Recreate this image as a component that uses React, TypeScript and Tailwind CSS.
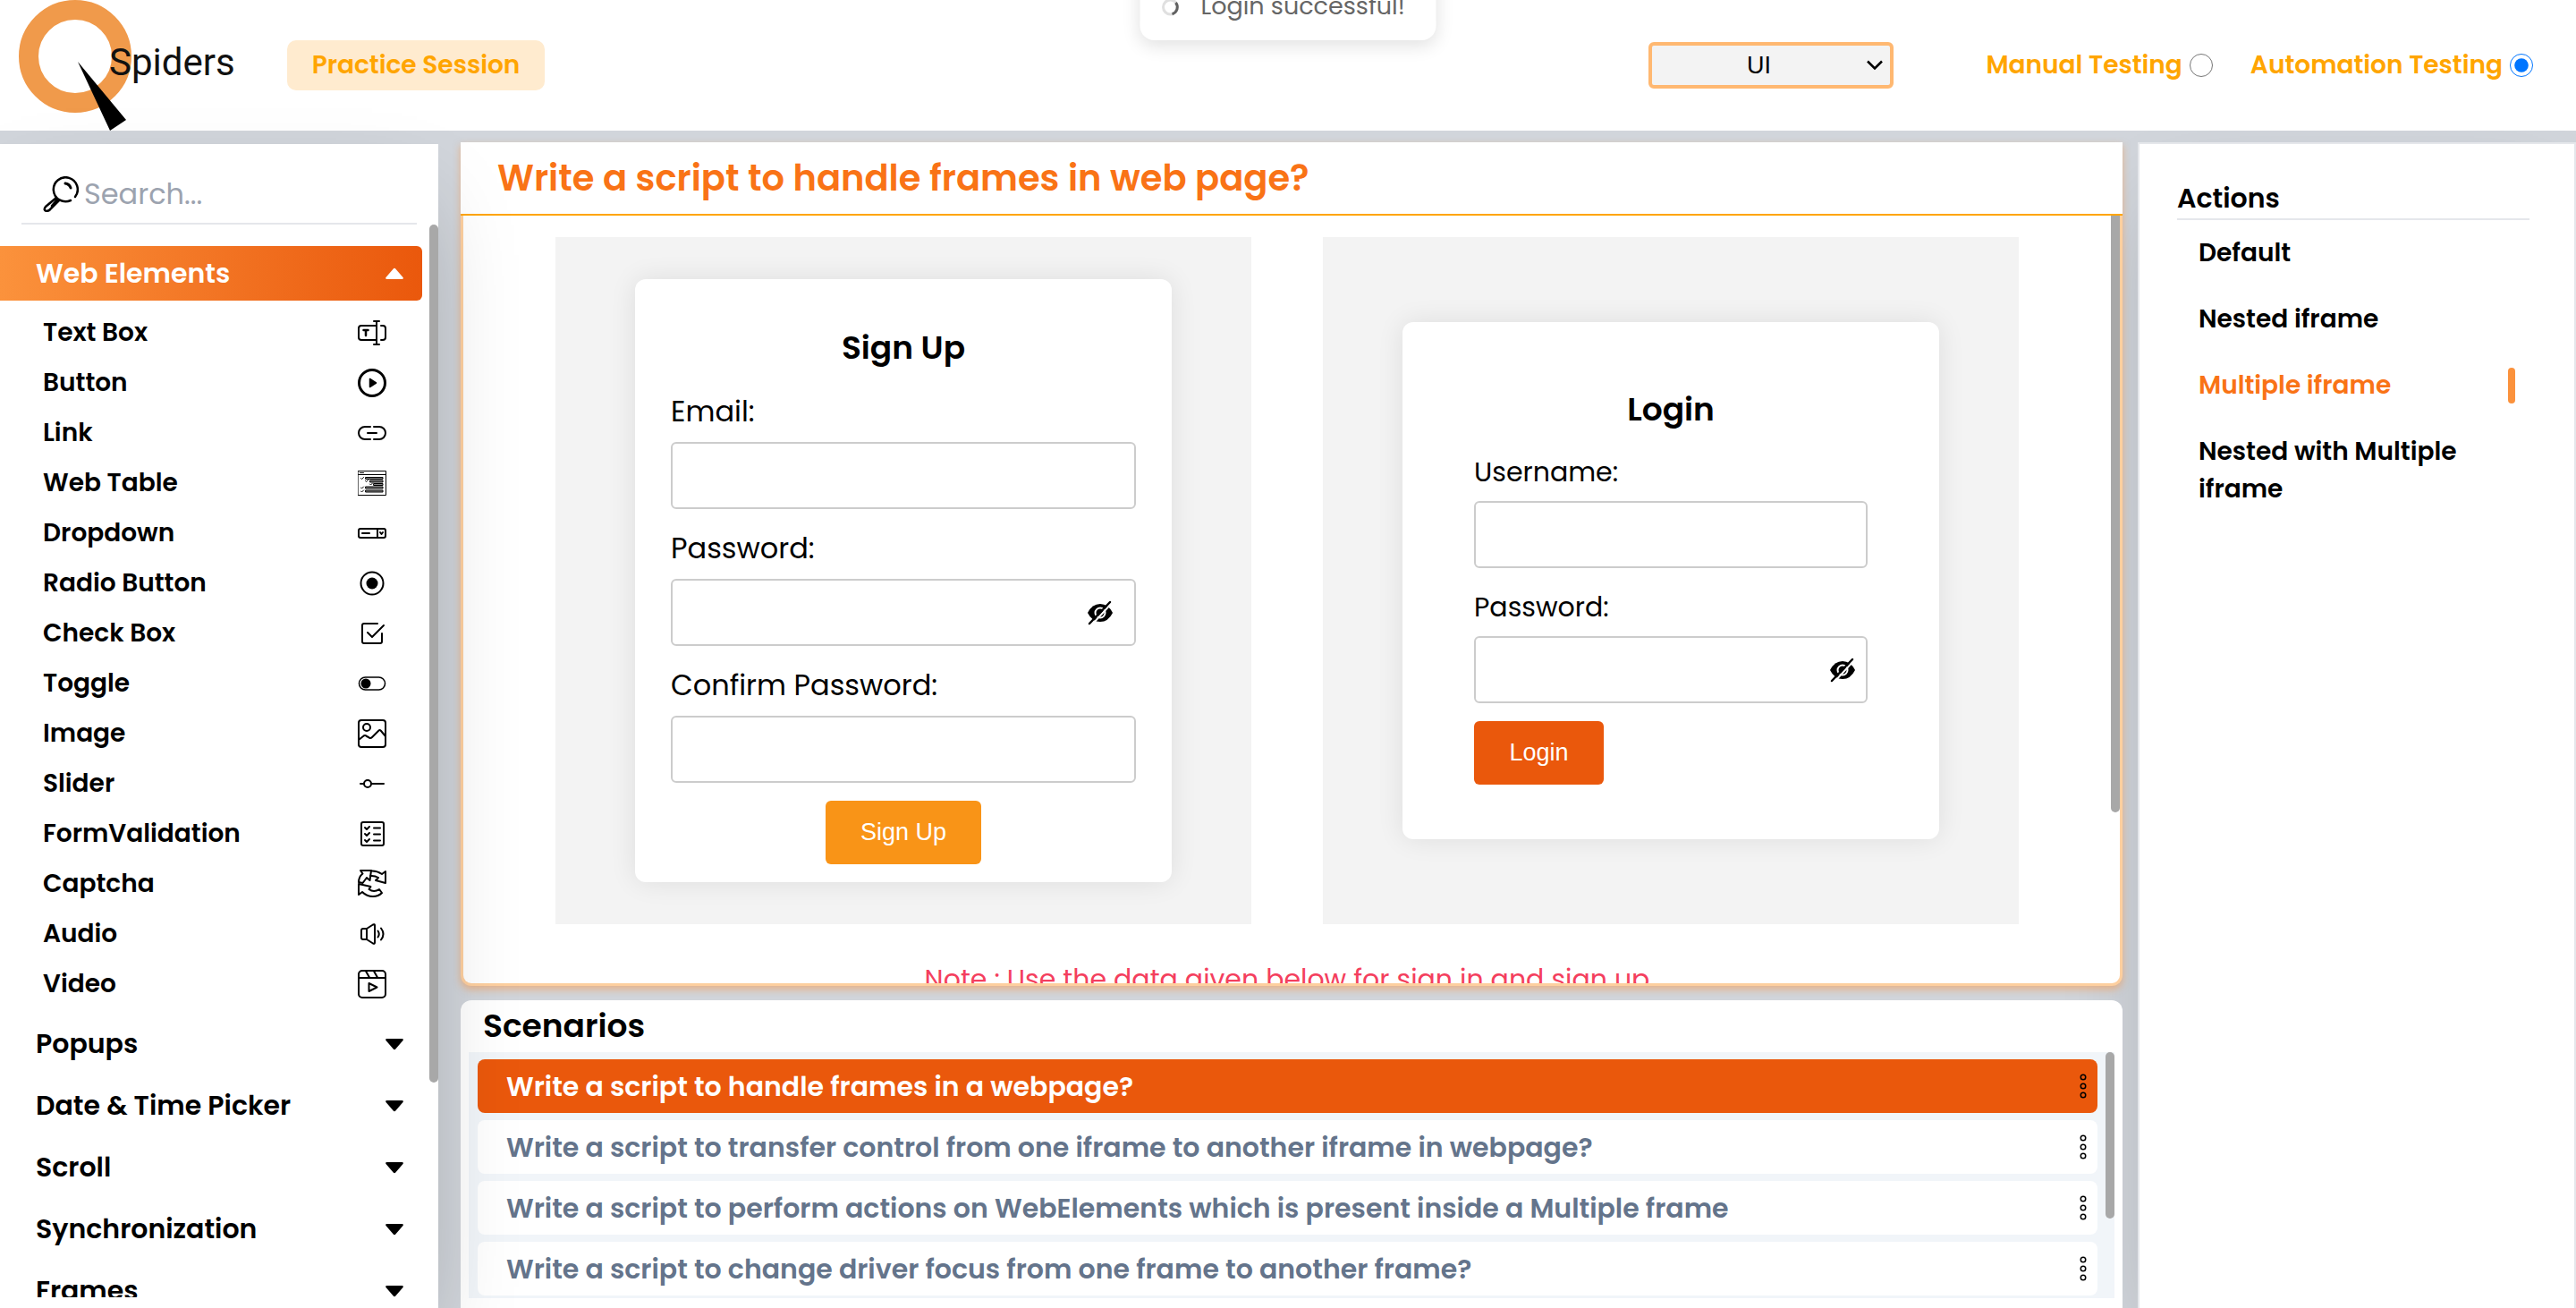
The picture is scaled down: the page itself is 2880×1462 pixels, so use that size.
import { useState, type ReactNode } from "react";

type SidebarItem = { label: string; icon: ReactNode };

function Icon({ children, width = 2 }: { children: ReactNode; width?: number }) {
  return (
    <svg
      viewBox="0 0 32 32"
      className="size-8"
      fill="none"
      stroke="currentColor"
      strokeWidth={width}
      strokeLinecap="round"
      strokeLinejoin="round"
      aria-hidden="true"
    >
      {children}
    </svg>
  );
}

const items: SidebarItem[] = [
  {
    label: "Text Box",
    icon: (
      <Icon>
        <path d="M21 8H4a3 3 0 0 0-3 3v10a3 3 0 0 0 3 3h17M26 8h2a3 3 0 0 1 3 3v10a3 3 0 0 1-3 3h-2M21 3v26M18 3h6M18 29h6" />
        <path d="M6.500 13h5M9 13v6" strokeWidth="2.500" />
      </Icon>
    ),
  },
  {
    label: "Button",
    icon: (
      <Icon width={3}>
        <circle cx="16" cy="16" r="14.500" />
        <path d="M13.500 11.500v9l7-4.500z" fill="currentColor" strokeWidth="1.500" />
      </Icon>
    ),
  },
  {
    label: "Link",
    icon: (
      <Icon>
        <path d="M14 9H8a7 7 0 0 0 0 14h6M18 9h6a7 7 0 0 1 0 14h-6M11 16h10" />
      </Icon>
    ),
  },
  {
    label: "Web Table",
    icon: (
      <Icon width={1}>
        <path d="M.5 2.500h31v27H.5zM.5 6.500h31M2.500 4.500h4" />
        <path d="M9 9.500h19v2H9zM14 13h14v2H14zM18 16.500h10v2H18zM9 20h19v2H9zM9 24h19v2H9z" fill="#888" />
        <path d="M3.500 10.500l1 1 2-2M8.500 13.500l1 1 2-2M13.500 17l1 1 2-2M3.500 21l1 1 2-2M3.500 25l1 1 2-2" />
      </Icon>
    ),
  },
  {
    label: "Dropdown",
    icon: (
      <Icon>
        <rect x="1" y="11" width="30" height="10" rx="2" />
        <path d="M22 11v10M5 16h8" />
        <path d="M25 15l1.500 2 1.500-2" />
      </Icon>
    ),
  },
  {
    label: "Radio Button",
    icon: (
      <Icon>
        <circle cx="16" cy="16" r="12.500" />
        <circle cx="16" cy="16" r="6.500" fill="currentColor" stroke="none" />
      </Icon>
    ),
  },
  {
    label: "Check Box",
    icon: (
      <Icon>
        <path d="M22 5H7a2 2 0 0 0-2 2v18a2 2 0 0 0 2 2h18a2 2 0 0 0 2-2v-9M11 15l5 5L29 7" />
      </Icon>
    ),
  },
  {
    label: "Toggle",
    icon: (
      <Icon width={1.5}>
        <rect x="1.500" y="9" width="29" height="14" rx="7" />
        <circle cx="9" cy="16" r="5.500" fill="currentColor" stroke="none" />
      </Icon>
    ),
  },
  {
    label: "Image",
    icon: (
      <Icon>
        <rect x="1" y="1" width="30" height="30" rx="3" />
        <circle cx="10" cy="9" r="4" />
        <path d="M1 23l5-4q2-2 4 0l2 1q2 2 4 0l7-7q2-2 3 0l5 6" />
      </Icon>
    ),
  },
  {
    label: "Slider",
    icon: (
      <Icon>
        <path d="M3 16h4M15 16h14" />
        <circle cx="11" cy="16" r="4" />
      </Icon>
    ),
  },
  {
    label: "FormValidation",
    icon: (
      <Icon width={2}>
        <rect x="4" y="3" width="25" height="26" rx="2" />
        <path d="M8 9l2 2 3-3M8 16l2 2 3-3M8 23l2 2 3-3M18 9.500h7M18 16.500h7M18 23.500h7" />
      </Icon>
    ),
  },
  {
    label: "Captcha",
    icon: (
      <Icon width={2}>
        <path d="M3 1h12l-1.500 11-3.500-3-4.500 6L1 14q0-6 4.500-9.500z" />
        <path d="M15 1.500q6-.5 12 3.500l4-3v13l-11-3 3-3q-4-2.500-9-2" />
        <path d="M1 16v12l4-3q5 5 12 5 6 0 10-4l-3-4q-6 4-11.500 0l2-3z" />
      </Icon>
    ),
  },
  {
    label: "Audio",
    icon: (
      <Icon width={2}>
        <path d="M4 12q0-2 2-2h4l7-4.500q2-1 2 1v19q0 2-2 1L10 22H6q-2 0-2-2zM10 10v12M22.500 12.500q2.500 3.500 0 7M26 9.500q5 6.500 0 13" />
      </Icon>
    ),
  },
  {
    label: "Video",
    icon: (
      <Icon>
        <rect x="1" y="1" width="30" height="30" rx="4" />
        <path d="M1 9h30M9 1.500l4 7M18 1.500l4 7" />
        <path d="M12.500 15v9l9-4.500z" />
      </Icon>
    ),
  },
];

const groups = ["Popups", "Date & Time Picker", "Scroll", "Synchronization", "Frames"];
const actions = ["Default", "Nested iframe", "Multiple iframe", "Nested with Multiple iframe"];
const scenarios = [
  "Write a script to handle frames in a webpage?",
  "Write a script to transfer control from one iframe to another iframe in webpage?",
  "Write a script to perform actions on WebElements which is present inside a Multiple frame",
  "Write a script to change driver focus from one frame to another frame?",
];

function Caret({ up = false }: { up?: boolean }) {
  return (
    <svg viewBox="0 0 20 14" className="h-3.5 w-5" fill="currentColor" aria-hidden="true">
      {up ? (
        <path d="M8.500 1.700q1.500-1.700 3 0l8 9.300q1 2-1 2h-17q-2 0-1-2z" />
      ) : (
        <path d="M8.500 12.300q1.500 1.700 3 0l8-9.300q1-2-1-2h-17q-2 0-1 2z" />
      )}
    </svg>
  );
}

function HiddenEye() {
  return (
    <svg viewBox="0 0 32 32" className="size-8" aria-hidden="true">
      <path d="M2 16q5-10 14-10t14 10q-5 10-14 10T2 16z" fill="#000" />
      <circle cx="16" cy="16" r="5.500" fill="none" stroke="#fff" strokeWidth="2" />
      <path d="M7 29L29 5" stroke="#fff" strokeWidth="2" />
      <path d="M4 28L27 4" stroke="#000" strokeWidth="2.500" strokeLinecap="round" />
    </svg>
  );
}

function Logo() {
  return (
    <svg viewBox="0 0 244 146" className="h-[146px] w-[244px]" role="img" aria-label="QSpiders">
      <circle cx="64" cy="63" r="52" fill="none" stroke="#f09a4b" strokeWidth="22" />
      <path d="M67 69l54 65-18 12z" fill="#000" />
      <text x="102" y="84" fontFamily="Roboto, sans-serif" fontSize="42" fill="#111">
        Spiders
      </text>
    </svg>
  );
}

function Header() {
  const [mode, setMode] = useState("automation");
  return (
    <header className="relative flex h-[146px] shrink-0 items-center bg-white pr-12 pl-5">
      <Logo />
      <button className="ml-[57px] h-14 w-72 rounded-[10px] bg-[#ffebcf] text-[28px] font-semibold text-[#ffa500]">
        Practice Session
      </button>
      <div className="ml-auto flex items-center">
        <div className="relative">
          <select
            aria-label="Practice type"
            className="h-[52px] w-[274px] appearance-none rounded-md border-4 border-[#ffb871] bg-[#f3f3f3] pr-7 text-center font-[Liberation_Sans] text-[27px] text-black"
          >
            <option>UI</option>
          </select>
          <svg viewBox="0 0 18 12" className="pointer-events-none absolute top-5 right-3 h-3 w-[18px]" fill="none" stroke="#000" strokeWidth="2.500" aria-hidden="true">
            <path d="M1 1.500l8 8 8-8" />
          </svg>
        </div>
        <label className="ml-[103px] flex items-center gap-2 text-[28px] font-semibold text-[#ffa500]">
          Manual Testing
          <input type="radio" name="mode" className="size-[26px]" checked={mode === "manual"} onChange={() => setMode("manual")} />
        </label>
        <label className="ml-[42px] flex items-center gap-2 text-[28px] font-semibold text-[#ffa500]">
          Automation Testing
          <input type="radio" name="mode" className="size-[26px]" checked={mode === "automation"} onChange={() => setMode("automation")} />
        </label>
      </div>
    </header>
  );
}

function Toast() {
  return (
    <div
      role="status"
      className="absolute -top-12 left-1/2 z-30 flex h-[93px] w-[331px] -translate-x-1/2 items-center gap-6 rounded-2xl bg-white pt-[18px] pl-6 text-[27px] text-[#666] shadow-[0_6px_20px_rgba(0,0,0,0.12)]"
    >
      <svg viewBox="0 0 20 20" className="size-5" fill="none" strokeWidth="3" aria-hidden="true">
        <circle cx="10" cy="10" r="8" stroke="#e0e0e0" />
        <path d="M16 5a8 8 0 0 1-4 12.700" stroke="#616161" />
      </svg>
      Login successful!
    </div>
  );
}

function Sidebar() {
  return (
    <aside className="relative z-10 mt-[15px] flex w-[490px] shrink-0 flex-col bg-white pb-3 shadow-[0_50px_100px_-24px_rgba(0,0,0,0.25)]">
      <div className="mx-6 flex h-[90px] shrink-0 items-center border-b-2 border-[#e5e7eb] pt-6 pl-6">
        <svg viewBox="0 0 40 40" className="size-10 shrink-0" fill="none" stroke="#000" strokeWidth="2.500" strokeLinecap="round" strokeLinejoin="round" aria-hidden="true">
          <path d="M36 23A13.500 13.500 0 1 0 31 27" />
          <path d="M25 8q5 1 6 5" strokeWidth="3" />
          <path d="M15 24L3 34q-3 4 1 5 3 0 5-3l9-9M16 26l-6 7" />
        </svg>
        <input
          type="search"
          aria-label="Search"
          placeholder="Search..."
          className="ml-1.5 w-full min-w-0 bg-transparent text-[32px] outline-none placeholder:text-[#9ca3af]"
        />
      </div>
      <nav className="relative min-h-0 flex-1 overflow-hidden pt-6">
        <button className="flex h-[61px] w-[472px] items-center justify-between rounded-r-md bg-[linear-gradient(to_right,#fb923c,#ea580c)] pr-[21px] pl-10 text-[30px] font-semibold text-white">
          Web Elements
          <Caret up />
        </button>
        <ul className="pt-2 pb-1">
          {items.map((item) => (
            <li key={item.label}>
              <a href="#" className="flex h-14 items-center justify-between pr-[58px] pl-12 text-[28px] font-semibold">
                {item.label}
                {item.icon}
              </a>
            </li>
          ))}
        </ul>
        {groups.map((group) => (
          <button key={group} className="flex h-[69px] w-[472px] items-center justify-between pr-[21px] pl-10 text-[30px] font-semibold">
            {group}
            <Caret />
          </button>
        ))}
        <div className="absolute top-0 right-0 h-4/5 w-2.5 rounded-full bg-[#a8a8a8]" />
      </nav>
    </aside>
  );
}

function Field({ id, label, secret = false, small = false }: { id: string; label: string; secret?: boolean; small?: boolean }) {
  return (
    <div>
      <label htmlFor={id} className={small ? "block pb-2.5 text-[30px] leading-[45px]" : "block pb-2.5 text-[32px] leading-[48px]"}>
        {label}
      </label>
      <div className="relative">
        <input
          id={id}
          type={secret ? "password" : "text"}
          className="block h-[75px] w-full rounded-md border-2 border-[#ccc] bg-white px-4 text-[28px] outline-none"
        />
        {secret && (
          <button type="button" aria-label="Show password" className={small ? "absolute top-[22px] right-3" : "absolute top-[22px] right-6"}>
            <HiddenEye />
          </button>
        )}
      </div>
    </div>
  );
}

function Frame({ children }: { children: ReactNode }) {
  return <div className="flex h-[768px] flex-1 items-center justify-center bg-[#f3f3f3]">{children}</div>;
}

function Playground() {
  return (
    <section className="relative flex min-h-0 flex-1 flex-col rounded-b-xl border-x-3 border-b-3 border-[#fdcf9f] bg-white shadow-[0_4px_8px_rgba(251,146,60,0.5)]">
      <h1 className="-mx-[3px] shrink-0 border-b-2 border-[#ffa500] bg-white pl-[41px] text-[40px] leading-[80px] font-semibold text-[#f97316]">
        Write a script to handle frames in web page?
      </h1>
      <div className="relative min-h-0 flex-1 overflow-hidden rounded-b-lg">
        <div className="pt-6 pr-2.5">
          <div className="flex gap-20 px-[103px]">
            <Frame>
              <form className="flex h-[674px] w-[600px] flex-col rounded-xl bg-white px-10 pt-[50px] shadow-[0_0_30px_rgba(0,0,0,0.09)]">
                <h2 className="pb-2 text-center text-[36px] leading-[54px] font-semibold">Sign Up</h2>
                <div className="flex flex-col gap-5 pt-3">
                  <Field id="email" label="Email:" />
                  <Field id="new-password" label="Password:" secret />
                  <Field id="confirm-password" label="Confirm Password:" />
                </div>
                <button type="button" className="mt-5 h-[71px] w-[174px] self-center rounded-md bg-[#f99417] font-[Liberation_Sans] text-[27px] text-white">
                  Sign Up
                </button>
              </form>
            </Frame>
            <Frame>
              <form className="flex h-[578px] w-[600px] flex-col rounded-xl bg-white px-20 pt-[71px] shadow-[0_0_30px_rgba(0,0,0,0.09)]">
                <h2 className="pb-5 text-center text-[36px] leading-[54px] font-semibold">Login</h2>
                <div className="flex flex-col gap-[21px]">
                  <Field id="username" label="Username:" small />
                  <Field id="password" label="Password:" secret small />
                </div>
                <button type="button" className="mt-5 h-[71px] w-[145px] rounded-md bg-[#ea580c] font-[Liberation_Sans] text-[27px] text-white">
                  Login
                </button>
              </form>
            </Frame>
          </div>
          <p className="pt-[38px] text-center text-[30px] leading-[48px] text-[#f43f5e]">
            Note : Use the data given below for sign in and sign up
          </p>
        </div>
        <div className="absolute top-0 right-0 h-[667px] w-2.5 rounded-b-full bg-[#a8a8a8]" />
      </div>
    </section>
  );
}

function Scenarios() {
  const [active, setActive] = useState(0);
  return (
    <section className="mt-4 shrink-0 rounded-t-xl bg-white px-[9px] pb-[11px]">
      <h2 className="pl-4 text-[36px] leading-[58px] font-semibold">Scenarios</h2>
      <div className="relative bg-[#f1f5f9]">
        <ul className="flex flex-col gap-2 pt-2 pr-[19px] pb-[3px] pl-2.5">
          {scenarios.map((text, i) => (
            <li
              key={text}
              className={
                i === active
                  ? "flex h-[60px] items-center justify-between rounded-lg bg-[#ea580c] pr-3 pl-8 text-white"
                  : "flex h-[60px] items-center justify-between rounded-lg bg-white pr-3 pl-8 text-[#64748b]"
              }
            >
              <button className="text-[30px] font-semibold" onClick={() => setActive(i)}>
                {text}
              </button>
              <svg viewBox="0 0 8 28" className="h-7 w-2" fill="none" stroke="#000" strokeWidth="1.500" aria-hidden="true">
                <circle cx="4" cy="4" r="2.750" />
                <circle cx="4" cy="14" r="2.750" />
                <circle cx="4" cy="24" r="2.750" />
              </svg>
            </li>
          ))}
        </ul>
        <div className="absolute top-0 right-0 h-[186px] w-2.5 rounded-full bg-[#a8a8a8]" />
      </div>
    </section>
  );
}

function Actions() {
  const [active, setActive] = useState("Multiple iframe");
  return (
    <aside className="mt-[13px] w-[490px] shrink-0 border-2 border-b-0 border-[#e5e7eb] bg-white pt-[38px] pr-[50px] pl-[42px] shadow-[0_50px_100px_-24px_rgba(0,0,0,0.2)]">
      <h2 className="border-b-2 border-[#e5e7eb] text-[30px] leading-[45px] font-semibold">Actions</h2>
      <ul className="flex flex-col gap-8 pt-4 pr-4 pl-6">
        {actions.map((action) => (
          <li key={action} className="flex items-center justify-between">
            <button
              onClick={() => setActive(action)}
              className={
                action === active
                  ? "text-left text-[28px] leading-[42px] font-semibold text-[#f97316]"
                  : "text-left text-[28px] leading-[42px] font-semibold"
              }
            >
              {action}
            </button>
            {action === active && <span className="h-10 w-2 rounded-full bg-[#fb923c]" />}
          </li>
        ))}
      </ul>
    </aside>
  );
}

export default function App() {
  return (
    <div className="relative flex h-screen flex-col overflow-hidden bg-[#d1d5db] font-[Poppins,Inter,sans-serif] text-black">
      <Toast />
      <Header />
      <div className="flex min-h-0 flex-1">
        <Sidebar />
        <main className="relative ml-[25px] flex min-w-0 flex-1 flex-col pt-[13px] pr-[17px]">
          <Playground />
          <Scenarios />
        </main>
        <Actions />
      </div>
    </div>
  );
}
